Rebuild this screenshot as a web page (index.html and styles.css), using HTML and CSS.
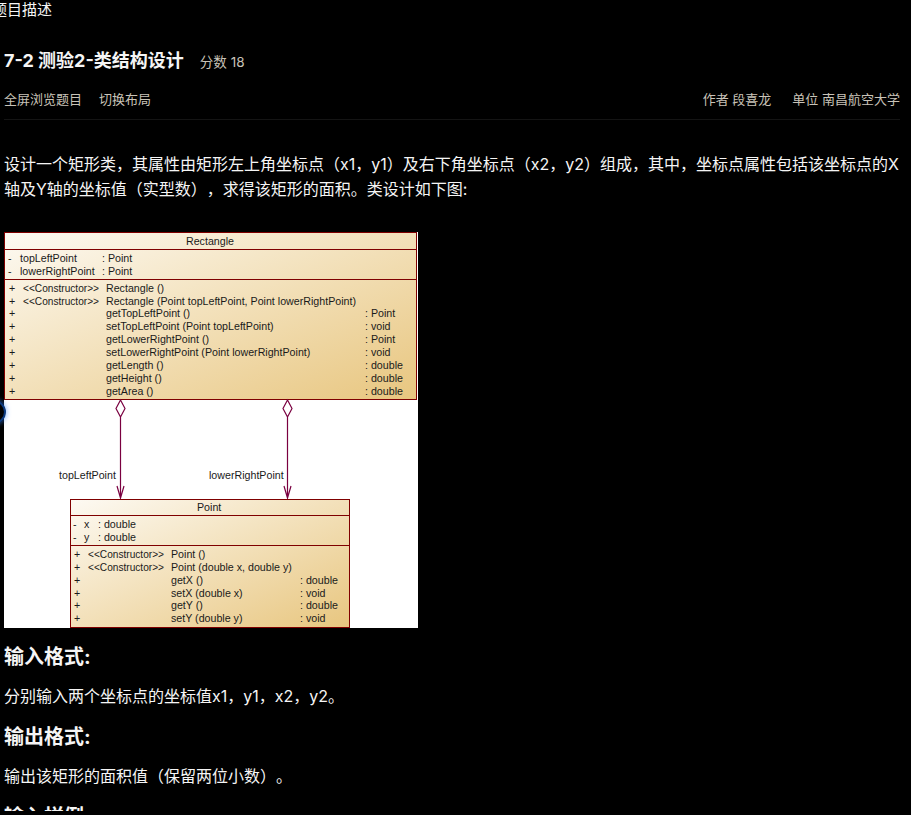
FILE: index.html
```html
<!DOCTYPE html>
<html lang="zh-CN">
<head>
<meta charset="utf-8">
<title>题目描述</title>
<link rel="stylesheet" href="styles.css">
</head>
<body>
<main class="page">
  <div class="tab-label">题目描述</div>
  <header class="problem-head">
    <div class="title-row">
      <h1 class="title">7-2 测验2-类结构设计</h1>
      <span class="score">分数 18</span>
    </div>
    <div class="meta-row">
      <div class="actions"><span>全屏浏览题目</span><span>切换布局</span></div>
      <div class="info"><span>作者 段喜龙</span><span>单位 南昌航空大学</span></div>
    </div>
  </header>
  <p class="text lead">设计一个矩形类，其属性由矩形左上角坐标点（x1，y1）及右下角坐标点（x2，y2）组成，其中，坐标点属性包括该坐标点的X轴及Y轴的坐标值（实型数），求得该矩形的面积。类设计如下图:</p>
  <div class="figure">
    <svg class="uml" width="414" height="396" viewBox="0 0 414 396" xmlns="http://www.w3.org/2000/svg">
      <defs>
        <linearGradient id="boxfill" x1="0" y1="0" x2="1" y2="1">
          <stop offset="0" stop-color="#fdfaf3"/>
          <stop offset="1" stop-color="#e8c67f"/>
        </linearGradient>
      </defs>
      <rect width="414" height="396" fill="#fff"/>
      <g class="box">
        <rect x="0.5" y="0.5" width="412" height="167" fill="url(#boxfill)"/>
        <path d="M0 17.5H413M0 47.5H413"/>
      </g>
      <g class="links">
        <path d="M116.500 168l4.500 8.500-4.500 8.500-4.500-8.500zM116.500 185V266M113 254l3.500 12 3.500-12"/>
        <path d="M283.500 168l4.500 8.500-4.500 8.500-4.500-8.500zM283.500 185V266M280 254l3.500 12 3.500-12"/>
      </g>
      <g class="box">
        <rect x="66.500" y="267.500" width="279" height="128" fill="url(#boxfill)"/>
        <path d="M66 283.500H346M66 313.500H346"/>
      </g>
      <g class="uml-text">
        <text x="182" y="12.500">Rectangle</text>
        <text x="4" y="29.500">-</text><text x="16" y="29.500">topLeftPoint</text><text x="98" y="29.500">: Point</text>
        <text x="4" y="42.500">-</text><text x="16" y="42.500">lowerRightPoint</text><text x="98" y="42.500">: Point</text>
        <text x="5" y="59.500">+</text><text class="stereo" x="19" y="59.500">&lt;&lt;Constructor&gt;&gt;</text><text x="102" y="59.500">Rectangle ()</text>
        <text x="5" y="72.500">+</text><text class="stereo" x="19" y="72.500">&lt;&lt;Constructor&gt;&gt;</text><text x="102" y="72.500">Rectangle (Point topLeftPoint, Point lowerRightPoint)</text>
        <text x="5" y="84.500">+</text><text x="102" y="84.500">getTopLeftPoint ()</text><text x="361" y="84.500">: Point</text>
        <text x="5" y="97.500">+</text><text x="102" y="97.500">setTopLeftPoint (Point topLeftPoint)</text><text x="361" y="97.500">: void</text>
        <text x="5" y="110.500">+</text><text x="102" y="110.500">getLowerRightPoint ()</text><text x="361" y="110.500">: Point</text>
        <text x="5" y="123.500">+</text><text x="102" y="123.500">setLowerRightPoint (Point lowerRightPoint)</text><text x="361" y="123.500">: void</text>
        <text x="5" y="136.500">+</text><text x="102" y="136.500">getLength ()</text><text x="361" y="136.500">: double</text>
        <text x="5" y="149.500">+</text><text x="102" y="149.500">getHeight ()</text><text x="361" y="149.500">: double</text>
        <text x="5" y="162.500">+</text><text x="102" y="162.500">getArea ()</text><text x="361" y="162.500">: double</text>
        <text x="55" y="246.500">topLeftPoint</text>
        <text x="205" y="246.500">lowerRightPoint</text>
        <text x="193" y="279">Point</text>
        <text x="69" y="295.500">-</text><text x="80" y="295.500">x</text><text x="94" y="295.500">: double</text>
        <text x="69" y="308.500">-</text><text x="80" y="308.500">y</text><text x="94" y="308.500">: double</text>
        <text x="70" y="325.500">+</text><text class="stereo" x="84" y="325.500">&lt;&lt;Constructor&gt;&gt;</text><text x="167" y="325.500">Point ()</text>
        <text x="70" y="338.500">+</text><text class="stereo" x="84" y="338.500">&lt;&lt;Constructor&gt;&gt;</text><text x="167" y="338.500">Point (double x, double y)</text>
        <text x="70" y="351.500">+</text><text x="167" y="351.500">getX ()</text><text x="296" y="351.500">: double</text>
        <text x="70" y="364.500">+</text><text x="167" y="364.500">setX (double x)</text><text x="296" y="364.500">: void</text>
        <text x="70" y="376.500">+</text><text x="167" y="376.500">getY ()</text><text x="296" y="376.500">: double</text>
        <text x="70" y="389.500">+</text><text x="167" y="389.500">setY (double y)</text><text x="296" y="389.500">: void</text>
      </g>
    </svg>
    <div class="focus-arc"></div>
  </div>
  <h2 class="heading">输入格式:</h2>
  <p class="text">分别输入两个坐标点的坐标值x1，y1，x2，y2。</p>
  <h2 class="heading">输出格式:</h2>
  <p class="text">输出该矩形的面积值（保留两位小数）。</p>
  <h2 class="heading">输入样例:</h2>
</main>
</body>
</html>
```
FILE: styles.css
```css
html, body {
  margin: 0;
  height: 100%;
  background: #000;
  overflow: hidden;
}
body {
  color: #fff;
  font-family: Inter, "Noto Sans CJK SC", sans-serif;
  text-spacing-trim: space-all;
}
.page {
  height: 811px;
  overflow: hidden;
  padding: 0 11px 0 4px;
  box-sizing: border-box;
}
.tab-label {
  margin-left: -12px;
  font-size: 15px;
  line-height: 20px;
  color: #f5f5f5;
}
.problem-head {
  margin-top: 29px;
  border-bottom: 1px solid #141414;
  padding-bottom: 11px;
}
.title-row {
  display: flex;
  align-items: center;
  gap: 16px;
  height: 24px;
}
.title {
  margin: 0;
  font-size: 18px;
  line-height: 24px;
  font-weight: 700;
  color: #f5f5f5;
}
.score {
  font-size: 13.500px;
  color: #c9c3b8;
}
.meta-row {
  display: flex;
  justify-content: space-between;
  margin-top: 17px;
  font-size: 13px;
  line-height: 18px;
  color: #c9c3b8;
}
.actions {
  display: flex;
  gap: 17px;
}
.info {
  display: flex;
  gap: 21px;
}
.text {
  margin: 13px 0 0;
  font-size: 16px;
  line-height: 25px;
  color: #f5f5f5;
}
.lead {
  margin-top: 32px;
}
.figure {
  position: relative;
  margin-top: 30px;
  width: 414px;
  height: 396px;
}
.uml {
  display: block;
}
.focus-arc {
  position: absolute;
  left: -22px;
  top: 168px;
  width: 20px;
  height: 20px;
  border: 2px solid #0b3a80;
  border-radius: 50%;
  box-shadow: 0 0 4px 1px rgba(60, 140, 255, 0.5);
}
.box {
  stroke: #7f0000;
  stroke-width: 1;
}
.links {
  fill: none;
  stroke: #7a0040;
  stroke-width: 1.200;
}
.uml-text {
  font-family: "Liberation Sans", Arial, sans-serif;
  font-size: 10.670px;
  fill: #1a1a1a;
  stroke: none;
}
.uml-text .stereo {
  font-size: 10.150px;
}
.heading {
  margin: 15px 0 0;
  font-size: 20px;
  line-height: 28px;
  font-weight: 700;
  color: #f5f5f5;
}
.text + .heading {
  margin-top: 14px;
}
```
